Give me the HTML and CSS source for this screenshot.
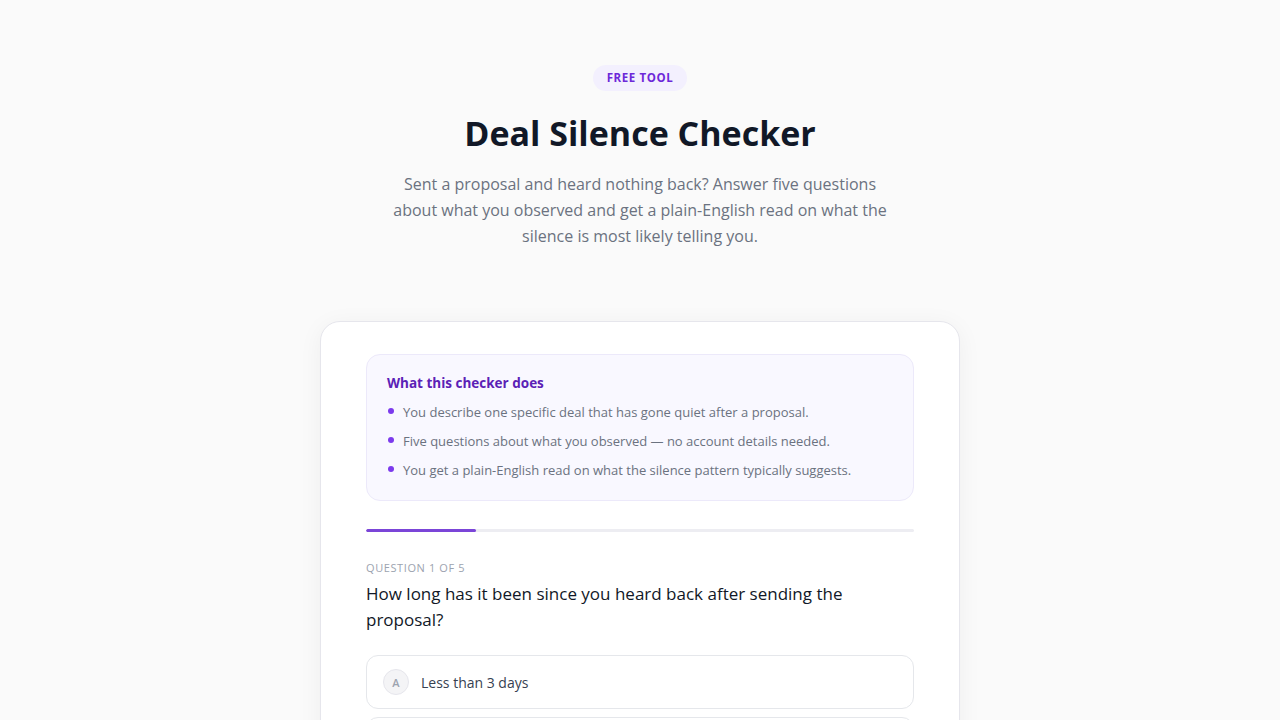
FILE: index.html
```html
<!DOCTYPE html>
<html lang="en">
<head>
<meta charset="utf-8">
<title>Deal Silence Checker</title>
<link rel="stylesheet" href="styles.css">
</head>
<body>
<main class="page">
  <header class="hero">
    <span class="badge">FREE TOOL</span>
    <h1 class="title">Deal Silence Checker</h1>
    <p class="lede">Sent a proposal and heard nothing back? Answer five questions about what you observed and get a plain-English read on what the silence is most likely telling you.</p>
  </header>

  <section class="card">
    <div class="info">
      <h2 class="info-title">What this checker does</h2>
      <ul class="info-list">
        <li>You describe one specific deal that has gone quiet after a proposal.</li>
        <li>Five questions about what you observed — no account details needed.</li>
        <li>You get a plain-English read on what the silence pattern typically suggests.</li>
      </ul>
    </div>

    <div class="progress"><div class="progress-fill" style="width: 20%"></div></div>

    <div class="question">
      <div class="q-count">QUESTION 1 OF 5</div>
      <h3 class="q-text">How long has it been since you heard back after sending the proposal?</h3>
    </div>

    <div class="options">
      <button class="option"><span class="opt-key">A</span><span class="opt-label">Less than 3 days</span></button>
      <button class="option"><span class="opt-key">B</span><span class="opt-label">3 to 7 days</span></button>
      <button class="option"><span class="opt-key">C</span><span class="opt-label">1 to 2 weeks</span></button>
      <button class="option"><span class="opt-key">D</span><span class="opt-label">More than 2 weeks</span></button>
    </div>
  </section>
</main>
</body>
</html>
```

FILE: styles.css
```css
* { box-sizing: border-box; }

html, body {
  margin: 0;
  padding: 0;
  background: #fafafa;
  font-family: "Open Sans", "Noto Sans", Arial, sans-serif;
  color: #111827;
}

.page {
  display: flex;
  flex-direction: column;
  align-items: center;
  padding: 65px 20px 80px;
}

.hero {
  display: flex;
  flex-direction: column;
  align-items: center;
  text-align: center;
}

.badge {
  display: inline-block;
  background: #f3f0fe;
  color: #6d28d9;
  font-size: 11.5px;
  font-weight: 700;
  letter-spacing: 0.6px;
  line-height: 16px;
  padding: 5px 14px;
  border-radius: 999px;
}

.title {
  margin: 22px 0 0;
  font-size: 34px;
  line-height: 40px;
  font-weight: 700;
  color: #111827;
}

.lede {
  margin: 18px 0 0;
  width: 510px;
  font-size: 16px;
  line-height: 26px;
  color: #6b7280;
}

.card {
  margin-top: 72px;
  width: 640px;
  background: #ffffff;
  border: 1px solid #e6e6ec;
  border-radius: 20px;
  box-shadow: 0 4px 24px rgba(17, 24, 39, 0.05);
  padding: 32px 45px 40px;
}

.info {
  background: #f9f8ff;
  border: 1px solid #ece9fa;
  border-radius: 14px;
  padding: 18px 20px 20px;
}

.info-title {
  margin: 0;
  font-size: 13.5px;
  line-height: 20px;
  font-weight: 700;
  color: #5b21b6;
}

.info-list {
  list-style: none;
  margin: 9px 0 0;
  padding: 0;
  display: flex;
  flex-direction: column;
  gap: 9px;
}

.info-list li {
  position: relative;
  padding-left: 16px;
  font-size: 13px;
  line-height: 20px;
  color: #6b7280;
}

.info-list li::before {
  content: "";
  position: absolute;
  left: 1px;
  top: 6px;
  width: 6px;
  height: 6px;
  border-radius: 50%;
  background: #7c3aed;
}

.progress {
  margin-top: 28px;
  height: 3px;
  background: #ededf2;
  border-radius: 2px;
  overflow: hidden;
}

.progress-fill {
  height: 100%;
  background: #7b45d8;
  border-radius: 2px;
}

.question {
  margin-top: 28px;
}

.q-count {
  font-size: 11px;
  line-height: 16px;
  letter-spacing: 0.6px;
  color: #9ca3af;
}

.q-text {
  margin: 5px 0 0;
  font-size: 17px;
  line-height: 26px;
  font-weight: 400;
  color: #111827;
}

.options {
  margin-top: 22px;
  display: flex;
  flex-direction: column;
  gap: 8px;
}

.option {
  display: flex;
  align-items: center;
  gap: 12px;
  width: 100%;
  height: 54px;
  padding: 0 16px;
  background: #ffffff;
  border: 1px solid #e5e7eb;
  border-radius: 12px;
  font-family: inherit;
  text-align: left;
  cursor: pointer;
}

.opt-key {
  display: flex;
  align-items: center;
  justify-content: center;
  width: 26px;
  height: 26px;
  border-radius: 50%;
  background: #f4f4f6;
  border: 1px solid #e6e6ec;
  font-size: 11px;
  font-weight: 600;
  color: #9ca3af;
}

.opt-label {
  font-size: 14px;
  color: #374151;
}
```
